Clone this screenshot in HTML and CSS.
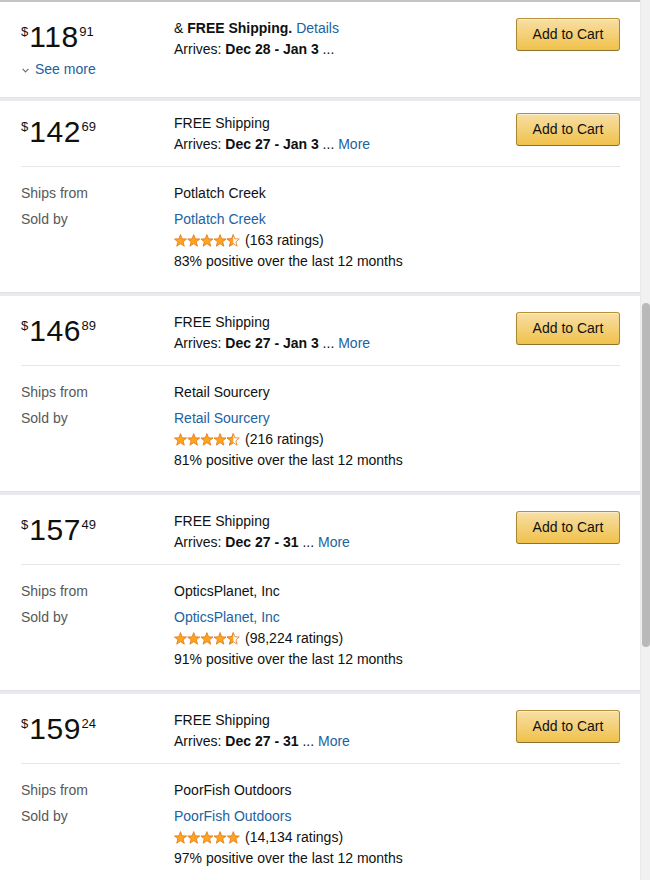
FILE: index.html
```html
<!DOCTYPE html>
<html lang="en">
<head>
<meta charset="utf-8">
<title>Other sellers</title>
<link rel="stylesheet" href="styles.css">
</head>
<body>
<svg class="defs" width="0" height="0" aria-hidden="true">
  <defs>
    <clipPath id="left-half"><rect x="0" y="0" width="6.5" height="13"/></clipPath>
    <symbol id="star-full" viewBox="0 0 13 13">
      <polygon class="star-fill" points="6.5,0.6 8.1,4.8 12.6,5 9.1,7.8 10.3,12.2 6.5,9.7 2.7,12.2 3.9,7.8 0.4,5 4.9,4.8"/>
    </symbol>
    <symbol id="star-half" viewBox="0 0 13 13">
      <polygon class="star-empty" points="6.5,0.6 8.1,4.8 12.6,5 9.1,7.8 10.3,12.2 6.5,9.7 2.7,12.2 3.9,7.8 0.4,5 4.9,4.8"/>
      <polygon class="star-fill" clip-path="url(#left-half)" points="6.5,0.6 8.1,4.8 12.6,5 9.1,7.8 10.3,12.2 6.5,9.7 2.7,12.2 3.9,7.8 0.4,5 4.9,4.8"/>
    </symbol>
  </defs>
</svg>

<div class="page">
  <div class="content">
    <div class="topline"></div>

    <div class="offer offer--pinned">
      <div class="main">
        <div class="price-col">
          <div class="price"><span class="price-sym">$</span><span class="price-whole">118</span><span class="price-frac">91</span></div>
          <a class="see-more" href="#"><svg class="chev" width="7" height="5" viewBox="0 0 7 5"><polyline points="0.6,0.8 3.5,3.8 6.4,0.8"/></svg>See more</a>
        </div>
        <div class="info">
          <div>&amp; <b>FREE Shipping.</b> <a class="link" href="#">Details</a></div>
          <div>Arrives: <b>Dec 28 - Jan 3</b> ...</div>
        </div>
        <button class="btn" type="button">Add to Cart</button>
      </div>
    </div>
    <div class="band"></div>

    <div class="offer offer--first">
      <div class="main">
        <div class="price-col">
          <div class="price"><span class="price-sym">$</span><span class="price-whole">142</span><span class="price-frac">69</span></div>
        </div>
        <div class="info">
          <div>FREE Shipping</div>
          <div>Arrives: <b>Dec 27 - Jan 3</b> ... <a class="link" href="#">More</a></div>
        </div>
        <button class="btn" type="button">Add to Cart</button>
      </div>
      <div class="divider"></div>
      <div class="details">
        <div class="label">Ships from</div>
        <div>Potlatch Creek</div>
        <div class="label">Sold by</div>
        <div>
          <a class="link" href="#">Potlatch Creek</a>
          <div class="rating">
            <svg class="stars" width="66" height="13" viewBox="0 0 66 13"><use href="#star-full" x="0" width="13" height="13"/><use href="#star-full" x="13.2" width="13" height="13"/><use href="#star-full" x="26.4" width="13" height="13"/><use href="#star-full" x="39.6" width="13" height="13"/><use href="#star-half" x="52.8" width="13" height="13"/></svg>
            <span>(163 ratings)</span>
          </div>
          <div>83% positive over the last 12 months</div>
        </div>
      </div>
    </div>
    <div class="band"></div>

    <div class="offer">
      <div class="main">
        <div class="price-col">
          <div class="price"><span class="price-sym">$</span><span class="price-whole">146</span><span class="price-frac">89</span></div>
        </div>
        <div class="info">
          <div>FREE Shipping</div>
          <div>Arrives: <b>Dec 27 - Jan 3</b> ... <a class="link" href="#">More</a></div>
        </div>
        <button class="btn" type="button">Add to Cart</button>
      </div>
      <div class="divider"></div>
      <div class="details">
        <div class="label">Ships from</div>
        <div>Retail Sourcery</div>
        <div class="label">Sold by</div>
        <div>
          <a class="link" href="#">Retail Sourcery</a>
          <div class="rating">
            <svg class="stars" width="66" height="13" viewBox="0 0 66 13"><use href="#star-full" x="0" width="13" height="13"/><use href="#star-full" x="13.2" width="13" height="13"/><use href="#star-full" x="26.4" width="13" height="13"/><use href="#star-full" x="39.6" width="13" height="13"/><use href="#star-half" x="52.8" width="13" height="13"/></svg>
            <span>(216 ratings)</span>
          </div>
          <div>81% positive over the last 12 months</div>
        </div>
      </div>
    </div>
    <div class="band"></div>

    <div class="offer">
      <div class="main">
        <div class="price-col">
          <div class="price"><span class="price-sym">$</span><span class="price-whole">157</span><span class="price-frac">49</span></div>
        </div>
        <div class="info">
          <div>FREE Shipping</div>
          <div>Arrives: <b>Dec 27 - 31</b> ... <a class="link" href="#">More</a></div>
        </div>
        <button class="btn" type="button">Add to Cart</button>
      </div>
      <div class="divider"></div>
      <div class="details">
        <div class="label">Ships from</div>
        <div>OpticsPlanet, Inc</div>
        <div class="label">Sold by</div>
        <div>
          <a class="link" href="#">OpticsPlanet, Inc</a>
          <div class="rating">
            <svg class="stars" width="66" height="13" viewBox="0 0 66 13"><use href="#star-full" x="0" width="13" height="13"/><use href="#star-full" x="13.2" width="13" height="13"/><use href="#star-full" x="26.4" width="13" height="13"/><use href="#star-full" x="39.6" width="13" height="13"/><use href="#star-half" x="52.8" width="13" height="13"/></svg>
            <span>(98,224 ratings)</span>
          </div>
          <div>91% positive over the last 12 months</div>
        </div>
      </div>
    </div>
    <div class="band"></div>

    <div class="offer">
      <div class="main">
        <div class="price-col">
          <div class="price"><span class="price-sym">$</span><span class="price-whole">159</span><span class="price-frac">24</span></div>
        </div>
        <div class="info">
          <div>FREE Shipping</div>
          <div>Arrives: <b>Dec 27 - 31</b> ... <a class="link" href="#">More</a></div>
        </div>
        <button class="btn" type="button">Add to Cart</button>
      </div>
      <div class="divider"></div>
      <div class="details">
        <div class="label">Ships from</div>
        <div>PoorFish Outdoors</div>
        <div class="label">Sold by</div>
        <div>
          <a class="link" href="#">PoorFish Outdoors</a>
          <div class="rating">
            <svg class="stars" width="66" height="13" viewBox="0 0 66 13"><use href="#star-full" x="0" width="13" height="13"/><use href="#star-full" x="13.2" width="13" height="13"/><use href="#star-full" x="26.4" width="13" height="13"/><use href="#star-full" x="39.6" width="13" height="13"/><use href="#star-full" x="52.8" width="13" height="13"/></svg>
            <span>(14,134 ratings)</span>
          </div>
          <div>97% positive over the last 12 months</div>
        </div>
      </div>
    </div>
    <div class="band"></div>
  </div>

  <div class="scrollbar"><div class="thumb"></div></div>
</div>
</body>
</html>
```

FILE: styles.css
```css
html, body {
  margin: 0;
  padding: 0;
  height: 880px;
  overflow: hidden;
  background: #ffffff;
}

body {
  font-family: "Liberation Sans", Arial, sans-serif;
  font-size: 14px;
  line-height: 21px;
  color: #0f1111;
}

.defs {
  position: absolute;
  width: 0;
  height: 0;
  overflow: hidden;
}

.star-fill {
  fill: #ffa41c;
  stroke: #de7921;
  stroke-width: 0.8;
  stroke-linejoin: round;
}

.star-empty {
  fill: #ffffff;
  stroke: #de7921;
  stroke-width: 0.8;
  stroke-linejoin: round;
}

.page {
  display: flex;
  height: 880px;
}

.content {
  width: 640px;
  flex: none;
}

.topline {
  height: 2px;
  background: #c4c4c4;
}

.band {
  height: 4px;
  background: #e7e9ec;
  border-top: 1px solid #dfe2e6;
  box-sizing: border-box;
}

.offer {
  padding: 16px 20px 20px 21px;
}

.offer--first {
  padding-top: 12px;
}

.offer--pinned {
  padding-bottom: 17px;
}

.main {
  display: flex;
  align-items: flex-start;
}

.price-col {
  width: 153px;
  flex: none;
  padding-top: 4px;
}

.price {
  display: flex;
  align-items: flex-start;
  font-size: 30px;
  line-height: 30px;
  color: #0f1111;
}

.price-sym,
.price-frac {
  font-size: 13px;
  line-height: 13px;
  margin-top: 3px;
}

.price-whole {
  letter-spacing: 0.6px;
  margin-right: -0.6px;
}

.price-sym {
  margin-right: 1px;
}

.price-frac {
  margin-left: 1px;
}

.see-more {
  margin-top: 7px;
  display: flex;
  align-items: center;
  gap: 6px;
  padding-left: 1px;
  color: #2162a1;
  text-decoration: none;
}

.chev {
  fill: none;
  stroke: #6f7373;
  stroke-width: 1.2;
  margin-top: 1px;
}

.info {
  flex: 1;
}

.info b {
  font-weight: 700;
}

.link {
  color: #2162a1;
  text-decoration: none;
}

.btn {
  width: 104px;
  height: 33px;
  box-sizing: border-box;
  flex: none;
  margin: 0;
  padding: 0;
  border: 1px solid;
  border-color: #b7913a #a88734 #8f7230;
  border-radius: 3px;
  background: linear-gradient(to bottom, #f7dfa5, #f0c14b);
  box-shadow: inset 0 1px 0 rgba(255, 255, 255, 0.45);
  font-family: "Liberation Sans", Arial, sans-serif;
  font-size: 14px;
  line-height: 21px;
  color: #111111;
  display: flex;
  align-items: center;
  justify-content: center;
}

.divider {
  height: 1px;
  background: #e7e7e7;
  margin-top: 11px;
}

.details {
  margin-top: 16px;
  display: grid;
  grid-template-columns: 153px 1fr;
  row-gap: 5px;
}

.label {
  color: #565959;
}

.rating {
  display: flex;
  align-items: center;
  gap: 5px;
}

.stars {
  flex: none;
}

.scrollbar {
  width: 10px;
  flex: none;
  box-sizing: border-box;
  padding-left: 1px;
  background: #f1f1f1;
  border-left: 1px solid #e9e9e9;
}

.thumb {
  width: 8px;
  height: 344px;
  margin-top: 303px;
  border-radius: 4px;
  background: #b9b9b9;
}
```
